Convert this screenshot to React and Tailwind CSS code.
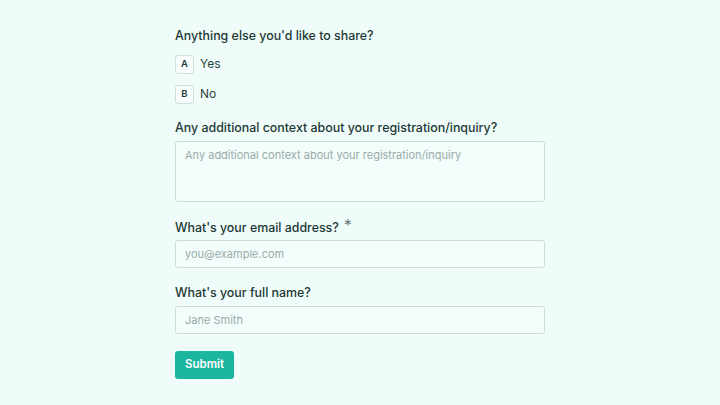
function Option({ letter, label }) {
  return (
    <div className="flex items-center gap-[6px] h-[20px]">
      <div className="w-[19px] h-[19px] flex items-center justify-center rounded-[3px] border border-[#cfe0dc] bg-[#f8fefd] text-[9.5px] font-semibold text-[#1f3a36]">
        {letter}
      </div>
      <span className="text-[12px] text-[#2a4541]">{label}</span>
    </div>
  );
}

export default function App() {
  return (
    <div
      className="w-full h-[405px] bg-[#f0fcfa] overflow-hidden"
      style={{ fontFamily: "Inter, 'Noto Sans', sans-serif" }}
    >
      <form className="w-[370px] ml-[175px] pt-[26px] flex flex-col">
        <p className="text-[12.4px] leading-5 font-medium text-[#1c3834]">
          Anything else you'd like to share?
        </p>
        <div className="mt-[8px] flex flex-col gap-[10px]">
          <Option letter="A" label="Yes" />
          <Option letter="B" label="No" />
        </div>

        <p className="mt-[14px] text-[12.4px] leading-5 font-medium text-[#1c3834]">
          Any additional context about your registration/inquiry?
        </p>
        <textarea
          className="mt-[3px] h-[61px] w-full resize-none rounded-[3px] border border-[#cbdcd9] bg-[#f3fdfb] px-[9px] py-[5px] text-[11px] outline-none placeholder:text-[#9aaba8]"
          placeholder="Any additional context about your registration/inquiry"
        />

        <p className="mt-[16px] flex items-start text-[12.4px] leading-5 font-medium text-[#1c3834]">
          What's your email address?
          <span className="ml-[5px] text-[#6b7f7c] text-[16px] leading-none font-normal relative top-[-1px]">*</span>
        </p>
        <input
          className="mt-[2px] h-[28px] w-full rounded-[3px] border border-[#cbdcd9] bg-[#f3fdfb] px-[9px] text-[11px] outline-none placeholder:text-[#9aaba8]"
          placeholder="you@example.com"
        />

        <p className="mt-[15px] text-[12.4px] leading-5 font-medium text-[#1c3834]">
          What's your full name?
        </p>
        <input
          className="mt-[3px] h-[28px] w-full rounded-[3px] border border-[#cbdcd9] bg-[#f3fdfb] px-[9px] text-[11px] outline-none placeholder:text-[#9aaba8]"
          placeholder="Jane Smith"
        />

        <div className="mt-[16px]">
          <button
            type="button"
            className="h-[28px] w-[59px] rounded-[3px] bg-[#1cb5a0] text-[11.5px] font-semibold text-white"
          >
            Submit
          </button>
        </div>
      </form>
    </div>
  );
}
